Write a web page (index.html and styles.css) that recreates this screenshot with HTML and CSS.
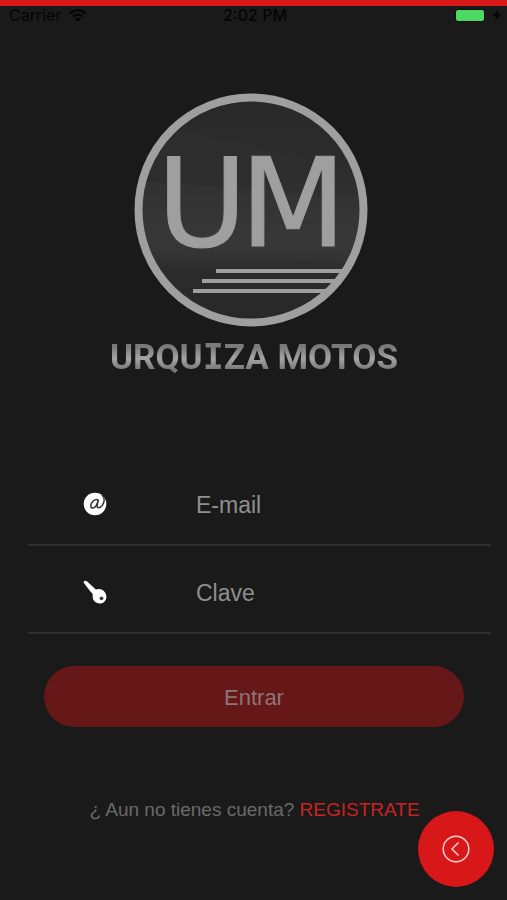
FILE: index.html
```html
<!DOCTYPE html>
<html lang="es">
<head>
<meta charset="utf-8">
<meta name="viewport" content="width=device-width, initial-scale=1">
<title>Urquiza Motos</title>
<link rel="stylesheet" href="styles.css">
</head>
<body>
<div class="screen">
  <header class="status">
    <div class="carrier">
      <span>Carrier</span>
      <svg class="wifi" viewBox="0 0 18 13" aria-hidden="true">
        <path d="M1 4.500a11.500 11.500 0 0 1 16 0M4 7.600a7.300 7.300 0 0 1 10 0" fill="none" stroke="currentColor" stroke-width="2.200"/>
        <path d="M9 12.500L6 10a4.500 4.500 0 0 1 6 0z" fill="currentColor"/>
      </svg>
    </div>
    <time>2:02 PM</time>
    <div class="power">
      <span class="battery"></span>
      <svg class="bolt" viewBox="0 0 8 12" aria-hidden="true"><path d="M5.500 0L0 7h3L2 12l6-7H5z" fill="currentColor"/></svg>
    </div>
  </header>

  <main class="content">
    <div class="brand">
      <svg class="emblem" viewBox="0 0 240 234" role="img" aria-label="UM">
        <defs>
          <linearGradient id="disc" x1="0" y1="0" x2="0" y2="1">
            <stop offset="0" stop-color="#292929"/>
            <stop offset=".35" stop-color="#2c2c2c"/>
            <stop offset=".65" stop-color="#383838"/>
            <stop offset=".78" stop-color="#2b2b2b"/>
            <stop offset="1" stop-color="#282828"/>
          </linearGradient>
          <clipPath id="inside"><circle cx="117" cy="117" r="112"/></clipPath>
        </defs>
        <circle cx="117" cy="117" r="112" fill="url(#disc)"/>
        <g clip-path="url(#inside)">
          <path d="M0 34L60 40L234 78V110L0 82z" fill="#303030" opacity=".5"/>
          <path d="M0 88L234 104V172L0 150z" fill="#3a3a3a" opacity=".35"/>
          <path d="M82 178H234M68 188H234M59 198H234" stroke="#9f9f9f" stroke-width="4"/>
        </g>
        <circle cx="117" cy="117" r="112.500" fill="none" stroke="#9f9f9f" stroke-width="8"/>
        <g class="monogram">
          <text x="23" y="153">U</text>
          <text x="106" y="153">M</text>
        </g>
      </svg>
      <h1 class="name">URQU<span class="slab">I</span>ZA MOTOS</h1>
    </div>

    <form class="login">
      <div class="field">
        <label for="email" aria-label="E-mail">
          <svg class="icon" viewBox="0 0 24 24" aria-hidden="true">
            <circle cx="12" cy="12" r="11.300" fill="#fff"/>
            <path d="M15.500 8.300c-1.500-1.300-4-.8-5.800 1.200c-2.400 2.600-2.600 6-.4 6.400c2.200.4 4.400-2.300 5.900-7.200c-1.200 4-1.700 6.800 0 7c3 .4 6-4 6-8c0-1.800-.8-3.200-2-4.400" fill="none" stroke="#333" stroke-width="1.500" stroke-linecap="round"/>
          </svg>
        </label>
        <input id="email" type="email" placeholder="E-mail">
      </div>
      <div class="field">
        <label for="clave" aria-label="Clave">
          <svg class="icon" viewBox="0 0 24 24" aria-hidden="true">
            <path d="M.6 2.500C.6.800 2.800.200 4.200 1.400L12.800 9.600C18 7.600 23.400 11.500 23.400 16.800C23.400 20.600 20.600 23.600 16.800 23.600C12.200 23.600 9 19.800 9.800 15.600L9.400 13.400L7.600 11.800L2.400 5z" fill="#fff"/>
            <circle cx="18.500" cy="18.300" r="1.900" fill="#444"/>
          </svg>
        </label>
        <input id="clave" type="password" placeholder="Clave">
      </div>
      <button class="submit" type="submit">Entrar</button>
    </form>

    <p class="signup">¿ Aun no tienes cuenta? <a href="#registro">REGISTRATE</a></p>
  </main>

  <button class="back" type="button" aria-label="Volver">
    <svg viewBox="0 0 28 28" aria-hidden="true">
      <circle cx="14" cy="14" r="12.800"/>
      <path d="M16.500 7.500L10 14l6.500 6.500"/>
    </svg>
  </button>
</div>
</body>
</html>
```
FILE: styles.css
```css
* {
  box-sizing: border-box;
}

body {
  margin: 0;
  background: #1a1a1a;
  color: #999;
  font-family: "Liberation Sans", Arial, sans-serif;
}

.screen {
  min-height: 100vh;
  border-top: 6px solid #d71718;
}

.status {
  display: grid;
  grid-template-columns: 1fr auto 1fr;
  align-items: center;
  height: 18px;
  padding: 0 6px 0 9px;
  color: #050505;
  font-family: Inter, sans-serif;
  font-size: 16px;
  line-height: 18px;
}

.status time {
  font-weight: 500;
}

.carrier,
.power {
  display: flex;
  align-items: center;
  gap: 8px;
}

.power {
  justify-content: flex-end;
}

.wifi {
  width: 18px;
  height: 13px;
}

.battery {
  width: 30px;
  height: 13px;
  border: 1px solid #0c0c0c;
  border-radius: 3px;
  background: #4cd964;
}

.bolt {
  width: 8px;
  height: 12px;
}

.content {
  display: flex;
  flex-direction: column;
  padding: 69px 16px 0 28px;
}

.brand {
  display: flex;
  flex-direction: column;
  align-items: center;
  padding-right: 11px;
}

.emblem {
  width: 240px;
  height: 234px;
}

.monogram {
  fill: #9f9f9f;
  stroke: #9f9f9f;
  stroke-width: 1;
  font-family: "DejaVu Sans", sans-serif;
  font-size: 123px;
}

.name {
  margin: 5px 0 0;
  background: linear-gradient(#7a7a7a 30%, #a4a4a4 52%, #777 74%);
  background-clip: text;
  color: transparent;
  font-family: Roboto, sans-serif;
  font-size: 35px;
  font-weight: 700;
  line-height: 50px;
  white-space: nowrap;
}

.slab {
  font-family: "DejaVu Sans Mono", monospace;
}

.login {
  display: flex;
  flex-direction: column;
  margin-top: 75px;
}

.field {
  display: grid;
  grid-template-columns: 168px 1fr;
  align-items: center;
  height: 88px;
  padding-top: 5px;
  border-bottom: 2px solid #2f2f2f;
}

.field label {
  padding-left: 55px;
}

.icon {
  display: block;
  width: 24px;
  height: 24px;
}

.field input {
  width: 100%;
  padding: 4px 0 0;
  border: 0;
  outline: 0;
  background: none;
  color: #ccc;
  font: inherit;
  font-size: 23px;
}

.field input::placeholder {
  color: #8f8f8f;
  opacity: 1;
}

.submit {
  height: 61px;
  margin: 32px 27px 0 16px;
  padding: 2px 0 0;
  border: 0;
  border-radius: 31px;
  background: #661718;
  color: #8e7474;
  font: inherit;
  font-size: 22px;
}

.signup {
  margin: 71px 0 0;
  padding-right: 10px;
  color: #6a6a6a;
  font-size: 19px;
  line-height: 24px;
  text-align: center;
}

.signup a {
  color: #cb2222;
  text-decoration: none;
}

.back {
  position: fixed;
  right: 13px;
  bottom: 13px;
  display: grid;
  place-items: center;
  width: 76px;
  height: 76px;
  padding: 0;
  border: 0;
  border-radius: 50%;
  background: #d71718;
}

.back svg {
  width: 28px;
  height: 28px;
  fill: none;
  stroke: #ffd0d0;
  stroke-width: 1.5;
}
```
